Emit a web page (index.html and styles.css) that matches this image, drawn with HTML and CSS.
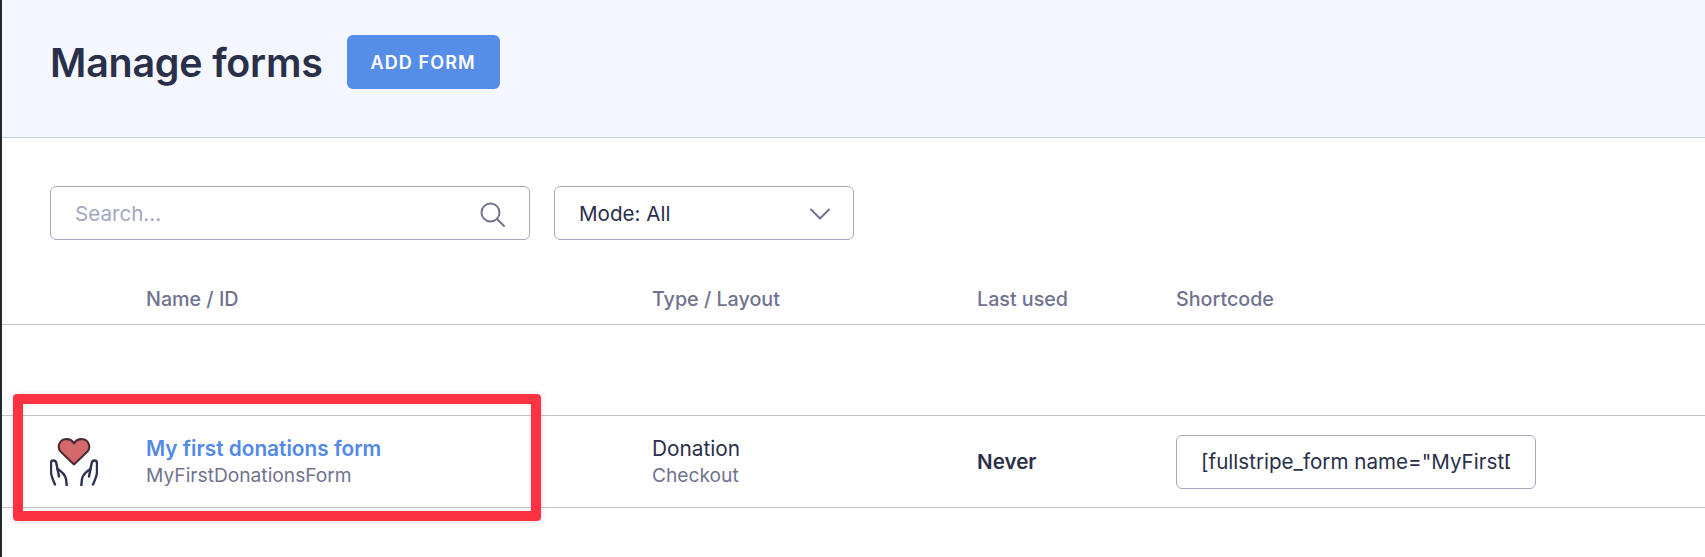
FILE: index.html
```html
<!DOCTYPE html>
<html lang="en">
<head>
  <meta charset="UTF-8">
  <title>Manage forms</title>
  <link rel="stylesheet" href="styles.css">
</head>
<body>
  <div class="page">
    <header class="page-head">
      <h1>Manage forms</h1>
      <a class="btn-add" href="#">ADD FORM</a>
    </header>

    <div class="filters">
      <div class="field search-field">
        <span class="placeholder">Search...</span>
        <svg class="search-icon" width="28" height="28" viewBox="0 0 28 28" fill="none" stroke="#6f7390" stroke-width="2">
          <circle cx="12.5" cy="12.5" r="9"/>
          <path d="M19 19l7 7" stroke-linecap="round"/>
        </svg>
      </div>
      <div class="field mode-field">
        <span>Mode: All</span>
        <svg class="chevron" width="20" height="12" viewBox="0 0 20 12" fill="none" stroke="#6f7390" stroke-width="2">
          <path d="M1 1.5l9 9 9-9" stroke-linecap="round" stroke-linejoin="round"/>
        </svg>
      </div>
    </div>

    <div class="row-grid table-head">
      <span></span>
      <span>Name / ID</span>
      <span>Type / Layout</span>
      <span>Last used</span>
      <span>Shortcode</span>
    </div>

    <div class="row-grid table-row">
      <svg class="form-icon" width="48" height="48" viewBox="0 0 48 48" fill="none" stroke-linecap="round" stroke-linejoin="round">
        <path d="M24 26.500L10.500 13.500C7 9.500 9 2 15 1.200C19 .8 22.500 2.500 24 5.500C25.500 2.500 29 .8 33 1.200C39 2 41 9.500 37.500 13.500Z" fill="#d4696b" stroke="#4a2b35" stroke-width="2"/>
        <g stroke="#2b3350" stroke-width="2.400">
          <path d="M5 46.500C2.500 41 1 38 1 34V25C1 22 5.500 21.500 6.300 25L7.500 31C11 33 15 37 16 41L16.700 47.500"/>
          <path d="M7.500 31L9 38.500"/>
          <path d="M43 46.500C45.500 41 47 38 47 34V25C47 22 42.500 21.500 41.700 25L40.500 31C37 33 33 37 32 41L31.300 47.500"/>
          <path d="M40.500 31L39 38.500"/>
        </g>
      </svg>
      <div class="cell-stack">
        <a class="form-name" href="#">My first donations form</a>
        <span class="muted">MyFirstDonationsForm</span>
      </div>
      <div class="cell-stack">
        <span class="cell-main">Donation</span>
        <span class="muted">Checkout</span>
      </div>
      <strong class="last-used">Never</strong>
      <input class="field shortcode-field" type="text" readonly value='[fullstripe_form name="MyFirstDonationsForm" type="donation"]'>
    </div>

    <div class="callout"></div>
  </div>
</body>
</html>
```
FILE: styles.css
```css
* { box-sizing: border-box; }

html, body {
  margin: 0;
  height: 557px;
  overflow: hidden;
  background: #fff;
}

body {
  font-family: Inter, sans-serif;
  font-size: 20.6px;
  color: #2a2f4a;
}

.page {
  position: relative;
  height: 557px;
  border-left: 2px solid #23282d;
}

.page-head {
  display: flex;
  align-items: center;
  height: 138px;
  padding: 0 0 14px 48px;
  background: #f4f7fe;
  border-bottom: 1px solid #c9cede;
}

h1 {
  margin: 0 24px 0 0;
  padding-top: 2px;
  font-size: 39.4px;
  font-weight: 600;
  letter-spacing: -0.2px;
}

.btn-add {
  display: flex;
  align-items: center;
  justify-content: center;
  width: 153px;
  height: 54px;
  padding-top: 2px;
  background: #568de8;
  border-radius: 6px;
  color: #fff;
  font-size: 18px;
  font-weight: 600;
  letter-spacing: 1.1px;
  text-decoration: none;
}

.filters {
  display: flex;
  gap: 24px;
  padding: 48px 0 0 48px;
}

.field {
  display: flex;
  align-items: center;
  justify-content: space-between;
  height: 54px;
  border: 1px solid #a3a7c0;
  border-radius: 6px;
  background: #fff;
}

.search-field {
  width: 480px;
  padding: 1px 23px 0 24px;
}

.placeholder { color: #a3a7c0; }

.mode-field {
  width: 300px;
  padding: 1px 23px 0 24px;
}

.row-grid {
  display: grid;
  grid-template-columns: 96px 506px 325px 199px 360px;
  align-items: center;
  padding-left: 48px;
  border-bottom: 1px solid #c4c4c8;
}

.table-head {
  height: 85px;
  padding-top: 33px;
  font-size: 19.7px;
  font-weight: 500;
  color: #6f7390;
  margin-bottom: 90px;
}

.table-row {
  height: 93px;
  border-top: 1px solid #c4c4c8;
}

.cell-stack {
  display: flex;
  flex-direction: column;
  padding-top: 1px;
  line-height: 27px;
}

.form-name {
  color: #5289e8;
  font-size: 20.8px;
  font-weight: 600;
  text-decoration: none;
}

.cell-main { font-size: 20.8px; }

.muted {
  color: #6f7390;
  font-size: 19.2px;
}

.last-used { font-weight: 600; }

.shortcode-field {
  width: 360px;
  padding: 0 25px 0 24px;
  font: inherit;
  color: inherit;
  outline: none;
}

.callout {
  position: absolute;
  left: 11px;
  top: 394px;
  width: 528px;
  height: 127px;
  border: 10px solid #fd3344;
  border-radius: 4px;
  box-shadow: 0 1px 6px rgba(60, 60, 90, 0.18), inset 0 0 4px rgba(60, 60, 90, 0.12);
}
```
